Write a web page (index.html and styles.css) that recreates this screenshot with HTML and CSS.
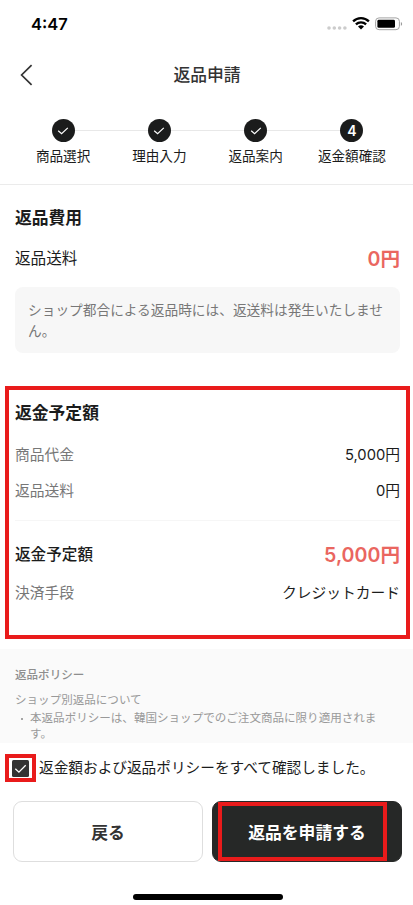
FILE: index.html
```html
<!DOCTYPE html>
<html lang="ja">
<head>
<meta charset="utf-8">
<meta name="viewport" content="width=device-width, initial-scale=1">
<title>返品申請</title>
<link rel="stylesheet" href="styles.css">
</head>
<body>
<div class="status">
  <span class="time">4:47</span>
  <svg class="status-icons" width="78" height="20" viewBox="0 0 78 20">
    <g fill="#ccc"><circle cx="4" cy="14" r="1.8"/><circle cx="9.3" cy="14" r="1.8"/><circle cx="14.6" cy="14" r="1.8"/><circle cx="19.9" cy="14" r="1.8"/></g>
    <g fill="none" stroke="#000" stroke-width="2.3"><path d="M28.1 7.4a11.4 11.4 0 0 1 15.8 0"/><path d="M30.9 10.4a7.3 7.3 0 0 1 10.2 0"/></g>
    <path d="M33 12.6a4.3 4.3 0 0 1 6 0l-3 3z"/>
    <rect x="50.6" y="3.9" width="23.8" height="11.8" rx="3.4" fill="#fff" stroke="#a3a3a3"/>
    <rect x="52.4" y="5.8" width="17.6" height="8" rx="1.4"/>
    <path d="M75.9 8v3.8q1.2-.6 1.2-1.9t-1.2-1.9z" fill="#999"/>
  </svg>
</div>
<header class="header">
  <svg class="back" width="14" height="22" viewBox="0 0 14 22" fill="none" stroke="#333" stroke-width="1.7"><path d="M11.6 1.2 1.6 11l10 9.8"/></svg>
  <h1>返品申請</h1>
</header>
<ol class="steps">
  <li><span class="dot"><svg width="12" height="10" viewBox="0 0 12 10"><path d="M1.2 4.8 4.6 7.8 10.8 1.9"/></svg></span>商品選択</li>
  <li><span class="dot"><svg width="12" height="10" viewBox="0 0 12 10"><path d="M1.2 4.8 4.6 7.8 10.8 1.9"/></svg></span>理由入力</li>
  <li><span class="dot"><svg width="12" height="10" viewBox="0 0 12 10"><path d="M1.2 4.8 4.6 7.8 10.8 1.9"/></svg></span>返品案内</li>
  <li><span class="dot">4</span>返金額確認</li>
</ol>
<section class="cost">
  <h2>返品費用</h2>
  <div class="row main"><span>返品送料</span><span class="total">0円</span></div>
  <p class="note">ショップ都合による返品時には、返送料は発生いたしません。</p>
</section>
<section class="refund">
  <h2>返金予定額</h2>
  <div class="row sub"><span class="label">商品代金</span><span>5,000円</span></div>
  <div class="row sub"><span class="label">返品送料</span><span>0円</span></div>
  <div class="row main divided"><span class="strong">返金予定額</span><span class="total">5,000円</span></div>
  <div class="row sub"><span class="label">決済手段</span><span>クレジットカード</span></div>
</section>
<section class="policy">
  <h3>返品ポリシー</h3>
  <p>ショップ別返品について</p>
  <ul><li>本返品ポリシーは、韓国ショップでのご注文商品に限り適用されます。</li></ul>
</section>
<div class="agree">
  <span class="check-frame"><svg width="17" height="17" viewBox="0 0 17 17"><rect width="17" height="17" rx="1.5" fill="#333"/><path d="M3.3 8.8 6.9 12.2 13.7 5.3" fill="none" stroke="#fff" stroke-width="1.3"/></svg></span>
  <span>返金額および返品ポリシーをすべて確認しました。</span>
</div>
<div class="actions">
  <button class="btn">戻る</button>
  <button class="btn primary">返品を申請する</button>
</div>
<div class="home-bar"></div>
</body>
</html>
```
FILE: styles.css
```css
*, *::before, *::after { box-sizing: border-box; margin: 0; padding: 0; }
body {
  width: 413px;
  height: 905px;
  overflow: hidden;
  background: #fff;
  color: #1b1c1c;
  font-family: Inter, "Noto Sans CJK JP", sans-serif;
}
.status {
  display: flex;
  justify-content: space-between;
  align-items: center;
  height: 48px;
  padding: 0 11px 0 31px;
}
.time { color: #000; font-size: 16.5px; font-weight: 600; }
.status-icons { margin-right: -1px; margin-top: -1px; }
.header {
  display: grid;
  grid-template-columns: 14px 1fr 14px;
  align-items: center;
  height: 53px;
  padding: 0 19px 0 20px;
}
h1 { color: #333; font-size: 16.8px; font-weight: 500; line-height: 24px; text-align: center; }
.steps {
  display: grid;
  grid-template-columns: repeat(4, 1fr);
  height: 84px;
  padding: 18px 13px 0 15px;
  border-bottom: 1px solid #ebebeb;
  list-style: none;
}
.steps li {
  display: flex;
  flex-direction: column;
  align-items: center;
  gap: 4px;
  font-size: 13.6px;
  line-height: 20px;
  background: linear-gradient(#e8e8e8, #e8e8e8) 0 11px / 100% 1px no-repeat;
}
.steps li:first-child { background-size: 50% 1px; background-position: 100% 11px; }
.steps li:last-child { background-size: 50% 1px; }
.dot {
  display: flex;
  align-items: center;
  justify-content: center;
  width: 23px;
  height: 23px;
  border-radius: 50%;
  background: #1b1c1c;
  color: #fff;
  font-size: 14px;
  font-weight: 600;
}
.dot path { fill: none; stroke: #fff; stroke-width: 1.2; }
.cost { height: 201px; padding: 21px 13px 0 15px; }
h2 { font-size: 16.8px; font-weight: 600; line-height: 24px; }
.row { display: flex; justify-content: space-between; align-items: center; }
.main { font-size: 15.6px; line-height: 28px; }
.total { color: #ea6660; font-size: 19.6px; font-weight: 600; }
.strong { font-weight: 500; }
.cost .row { margin-top: 15px; }
.note {
  height: 66px;
  margin-top: 14px;
  padding: 13px;
  border-radius: 8px;
  background: #f7f7f7;
  color: #777;
  font-size: 13.7px;
  line-height: 20.5px;
  word-break: break-all;
}
.refund {
  height: 253px;
  margin: 0 3px 0 5px;
  padding: 11px 6px 0;
  border: 4px solid #e91b1b;
}
.sub { height: 36px; font-size: 14.75px; line-height: 24px; }
.label { color: #777; }
h2 + .sub { margin-top: 12px; }
.divided { margin: 11px 0 6px; padding-top: 20px; border-top: 1px solid #f6f6f6; }
.policy {
  height: 94px;
  margin-top: 10px;
  padding: 17px 15px 0;
  background: #fafafa;
  color: #999;
  font-size: 11.55px;
  line-height: 16px;
}
h3 { font-size: 11.55px; font-weight: 500; line-height: 18px; color: #8e8e8e; }
.policy p { margin-top: 8px; line-height: 16px; }
.policy ul { list-style: none; margin-top: 2px; }
.policy li { padding-left: 15px; padding-right: 3px; word-break: break-all; }
.policy li::before {
  content: "";
  float: left;
  width: 2px;
  height: 2px;
  margin: 8px 0 0 -9px;
  border-radius: 50%;
  background: #888;
}
.agree {
  display: flex;
  align-items: center;
  gap: 3px;
  height: 50px;
  padding-left: 5px;
  font-size: 14.67px;
  line-height: 24px;
}
.check-frame {
  display: flex;
  align-items: center;
  justify-content: center;
  width: 31px;
  height: 28px;
  border: 4px solid #e91b1b;
}
.actions {
  display: grid;
  grid-template-columns: 1fr 1fr;
  gap: 9px;
  margin-top: 8px;
  padding: 0 11px 0 13px;
}
.btn {
  position: relative;
  height: 61px;
  border: 1px solid #dedede;
  border-radius: 9px;
  background: #fff;
  color: #333;
  font-family: inherit;
  font-size: 16.8px;
  font-weight: 600;
}
.primary { border-color: #262827; background: #262827; color: #fff; }
.primary::after {
  content: "";
  position: absolute;
  top: 0;
  left: 5px;
  width: 169px;
  height: 59px;
  border: 4px solid #e91b1b;
}
.home-bar { width: 150px; height: 6px; margin: 32px 0 0 133px; border-radius: 3px; background: #000; }
```
